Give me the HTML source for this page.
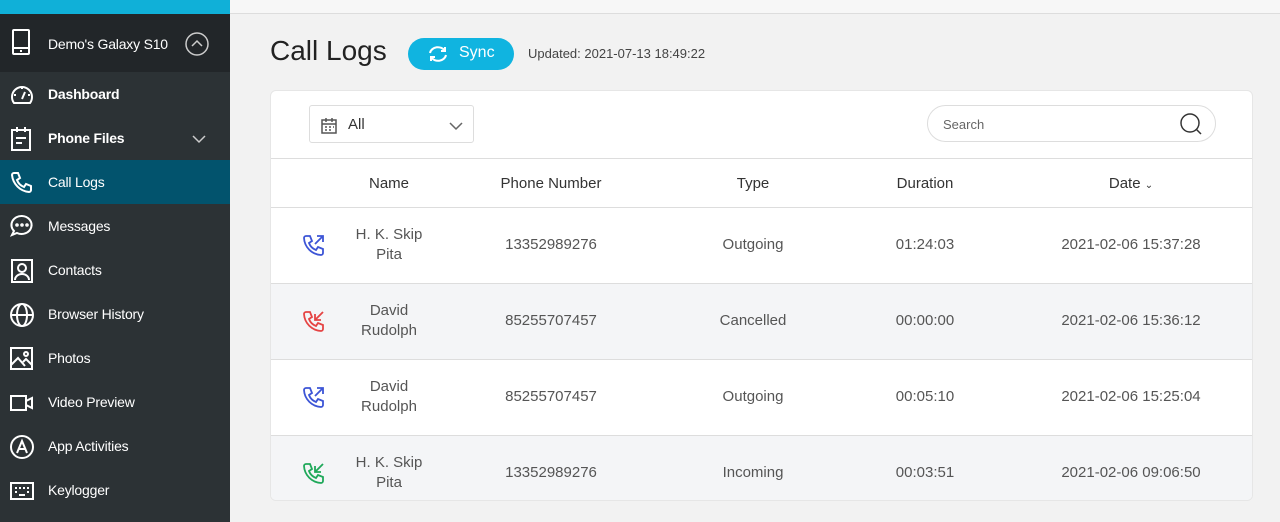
<!DOCTYPE html>
<html><head><style>
*{margin:0;padding:0;box-sizing:border-box}
body{width:1280px;height:522px;overflow:hidden;background:#f2f2f2;font-family:"Liberation Sans",Arial,sans-serif;position:relative}
.side{position:absolute;left:0;top:0;width:230px;height:522px;background:#2c3235}
.topband{position:absolute;left:0;top:0;width:230px;height:14px;background:#10b0d8}
.dev{position:absolute;left:0;top:14px;width:230px;height:58px;background:#222629;color:#fff;font-size:14px;letter-spacing:-0.2px}
.item{position:absolute;left:0;width:230px;height:44px;color:#fff;font-size:14px;letter-spacing:-0.2px}
.item span{position:absolute;left:48px;top:14px}
.item svg{position:absolute;left:9px;top:10px}
.act{background:#02536d}
.main{position:absolute;left:230px;top:0;right:0;height:14px;border-bottom:1px solid #ddd;background:#f7f7f7}
h1{position:absolute;left:270px;top:35px;font-weight:normal;font-size:28px;color:#222}
.sync{position:absolute;left:408px;top:38px;width:106px;height:32px;border-radius:16px;background:#10b4e0;color:#fff;font-size:16px}
.upd{position:absolute;left:528px;top:46px;font-size:13px;color:#444}
.card{position:absolute;left:270px;top:90px;width:983px;height:411px;background:#fff;border-radius:6px;border:1px solid #e6e6e6;overflow:hidden}
.sel{position:absolute;left:38px;top:14px;width:165px;height:38px;border:1px solid #ddd;border-radius:3px;font-size:15px;color:#333}
.search{position:absolute;left:656px;top:14px;width:289px;height:37px;border:1px solid #ddd;border-radius:19px;font-size:13px;color:#666}
.row{position:absolute;left:0;width:983px;border-top:1px solid #ddd;font-size:15px;color:#555}
.row div{position:absolute;text-align:center;transform:translateX(-50%);line-height:20px}
.hd{color:#333}
.gray{background:#f4f5f7}
</style></head><body>
<div class="side"></div><div class="topband"></div>
<div class="dev">
<svg width="22" height="26" style="position:absolute;left:10px;top:15px" fill="none" stroke="#fff" stroke-width="2"><rect x="3" y="1" width="16" height="24" rx="1"/><line x1="3" y1="19" x2="19" y2="19"/><line x1="10" y1="22" x2="12" y2="22"/></svg>
<span style="position:absolute;left:48px;top:22px">Demo's Galaxy S10</span>
<svg width="24" height="24" style="position:absolute;left:185px;top:18px" fill="none" stroke="#ccc" stroke-width="1.5"><circle cx="12" cy="12" r="11"/><path d="M7 14l5-5 5 5"/></svg>
</div>
<div class="item" style="top:72px"><svg width="26" height="26" fill="none" stroke="#fff" stroke-width="2"><path d="M5 21A10 10 0 1 1 21 21z"/><path d="M13 17l3-7M5 13h2M19 13h2M13 5v2"/></svg><span style="font-weight:bold">Dashboard</span></div>
<div class="item" style="top:116px"><svg width="26" height="26" fill="none" stroke="#fff" stroke-width="2"><rect x="3" y="4" width="18" height="20"/><path d="M8 1v5M16 1v5M7 12h10M7 17h6"/></svg><span style="font-weight:bold">Phone Files</span><svg width="14" height="10" style="left:192px;top:18px" fill="none" stroke="#ccc" stroke-width="1.5"><path d="M1 2l6 6 6-6"/></svg></div>
<div class="item act" style="top:160px"><svg width="26" height="26" fill="none" stroke="#fff" stroke-width="2"><path d="M5 3l4 0 2 5-3 2a12 12 0 0 0 7 7l2-3 5 2v4a2 2 0 0 1-2 2A19 19 0 0 1 3 5a2 2 0 0 1 2-2z"/></svg><span>Call Logs</span></div>
<div class="item" style="top:204px"><svg width="26" height="26" fill="none" stroke="#fff" stroke-width="2"><path d="M13 2a10 9 0 1 1-5 17l-5 2 2-4A10 9 0 0 1 13 2z"/><circle cx="8" cy="11" r=".8"/><circle cx="13" cy="11" r=".8"/><circle cx="18" cy="11" r=".8"/></svg><span>Messages</span></div>
<div class="item" style="top:248px"><svg width="26" height="26" fill="none" stroke="#fff" stroke-width="2"><rect x="3" y="2" width="20" height="22"/><circle cx="13" cy="10" r="4"/><path d="M6 22a7 6 0 0 1 14 0"/></svg><span>Contacts</span></div>
<div class="item" style="top:292px"><svg width="26" height="26" fill="none" stroke="#fff" stroke-width="2"><circle cx="13" cy="13" r="11"/><ellipse cx="13" cy="13" rx="5" ry="11"/><path d="M2 13h22"/></svg><span>Browser History</span></div>
<div class="item" style="top:336px"><svg width="26" height="26" fill="none" stroke="#fff" stroke-width="2"><rect x="2" y="2" width="21" height="21"/><path d="M2 19l7-7 7 8M14 16l3-3 6 6"/><circle cx="17" cy="8" r="2"/></svg><span>Photos</span></div>
<div class="item" style="top:380px"><svg width="26" height="26" fill="none" stroke="#fff" stroke-width="2"><rect x="2" y="6" width="15" height="14"/><path d="M17 11l6-3v10l-6-3"/></svg><span>Video Preview</span></div>
<div class="item" style="top:424px"><svg width="26" height="26" fill="none" stroke="#fff" stroke-width="2"><circle cx="13" cy="13" r="11"/><path d="M8 19l5-12 5 12M10 15h6"/></svg><span>App Activities</span></div>
<div class="item" style="top:468px"><svg width="26" height="26" fill="none" stroke="#fff" stroke-width="2"><rect x="2" y="5" width="22" height="16"/><path d="M6 10h2M10 10h2M14 10h2M18 10h2M6 14h2M18 14h2M10 17h6"/></svg><span>Keylogger</span></div>

<div class="main"></div>
<h1>Call Logs</h1>
<div class="sync"><svg width="22" height="18" style="position:absolute;left:19px;top:7px" fill="none" stroke="#fff" stroke-width="2"><path d="M3 8a8 7 0 0 1 15-2M19 10a8 7 0 0 1-15 2"/><path d="M18 2v4h-4M4 16v-4h4"/></svg><span style="position:absolute;left:51px;top:6px">Sync</span></div>
<div class="upd">Updated: 2021-07-13 18:49:22</div>
<div class="card">
<div class="sel"><svg width="18" height="18" style="position:absolute;left:10px;top:11px" fill="none" stroke="#555" stroke-width="1.5"><rect x="2" y="3" width="14" height="13"/><path d="M2 7h14M6 1v4M12 1v4M5 10h2M9 10h2M13 10h1M5 13h2M9 13h2"/></svg><span style="position:absolute;left:38px;top:10px">All</span><svg width="14" height="10" style="position:absolute;left:139px;top:15px" fill="none" stroke="#666" stroke-width="1.5"><path d="M1 2l6 6 6-6"/></svg></div>
<div class="search"><span style="position:absolute;left:15px;top:11px">Search</span><svg width="24" height="24" style="position:absolute;left:251px;top:6px" fill="none" stroke="#333" stroke-width="1.5"><circle cx="11" cy="11" r="9"/><path d="M17 17l5 5"/></svg></div>
<div class="row hd" style="top:67px;height:49px"><div style="left:118px;top:15px">Name</div><div style="left:280px;top:15px">Phone Number</div><div style="left:482px;top:15px">Type</div><div style="left:654px;top:15px">Duration</div><div style="left:860px;top:15px">Date <span style="font-size:10px">&#8964;</span></div></div>

<div class="row" style="top:116px;height:76px"><svg width="24" height="24" style="position:absolute;left:32px;top:25px" fill="none" stroke="#3d55d6" stroke-width="1.8"><path d="M3 3h4l2 5-3 2a12 12 0 0 0 7 7l2-3 5 2v4a2 2 0 0 1-2 2A18 18 0 0 1 1 5a2 2 0 0 1 2-2z"/><path d="M12 11l8-8M14 3h6v6"/></svg><div style="left:118px;top:17px">H. K. Skip<br>Pita</div><div style="left:280px;top:27px">13352989276</div><div style="left:482px;top:27px">Outgoing</div><div style="left:654px;top:27px">01:24:03</div><div style="left:860px;top:27px;width:200px">2021-02-06 15:37:28</div></div>
<div class="row gray" style="top:192px;height:76px"><svg width="24" height="24" style="position:absolute;left:32px;top:25px" fill="none" stroke="#e54444" stroke-width="1.8"><path d="M3 3h4l2 5-3 2a12 12 0 0 0 7 7l2-3 5 2v4a2 2 0 0 1-2 2A18 18 0 0 1 1 5a2 2 0 0 1 2-2z"/><path d="M20 3l-8 8M12 5v6h6"/></svg><div style="left:118px;top:17px">David<br>Rudolph</div><div style="left:280px;top:27px">85255707457</div><div style="left:482px;top:27px">Cancelled</div><div style="left:654px;top:27px">00:00:00</div><div style="left:860px;top:27px;width:200px">2021-02-06 15:36:12</div></div>
<div class="row" style="top:268px;height:76px"><svg width="24" height="24" style="position:absolute;left:32px;top:25px" fill="none" stroke="#3d55d6" stroke-width="1.8"><path d="M3 3h4l2 5-3 2a12 12 0 0 0 7 7l2-3 5 2v4a2 2 0 0 1-2 2A18 18 0 0 1 1 5a2 2 0 0 1 2-2z"/><path d="M12 11l8-8M14 3h6v6"/></svg><div style="left:118px;top:17px">David<br>Rudolph</div><div style="left:280px;top:27px">85255707457</div><div style="left:482px;top:27px">Outgoing</div><div style="left:654px;top:27px">00:05:10</div><div style="left:860px;top:27px;width:200px">2021-02-06 15:25:04</div></div>
<div class="row gray" style="top:344px;height:76px"><svg width="24" height="24" style="position:absolute;left:32px;top:25px" fill="none" stroke="#1fa85a" stroke-width="1.8"><path d="M3 3h4l2 5-3 2a12 12 0 0 0 7 7l2-3 5 2v4a2 2 0 0 1-2 2A18 18 0 0 1 1 5a2 2 0 0 1 2-2z"/><path d="M20 3l-8 8M12 5v6h6"/></svg><div style="left:118px;top:17px">H. K. Skip<br>Pita</div><div style="left:280px;top:27px">13352989276</div><div style="left:482px;top:27px">Incoming</div><div style="left:654px;top:27px">00:03:51</div><div style="left:860px;top:27px;width:200px">2021-02-06 09:06:50</div></div>
</div>
</body></html>
